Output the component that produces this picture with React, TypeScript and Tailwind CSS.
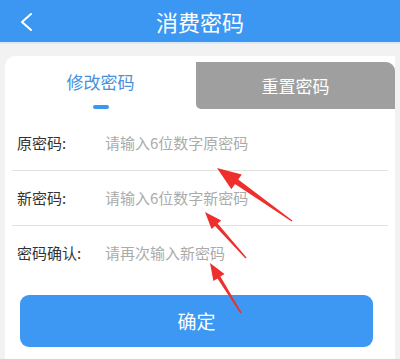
import React from "react"

type Pt = [number, number]

const FIELDS = [
  { label: "原密码:", hint: "请输入6位数字原密码" },
  { label: "新密码:", hint: "请输入6位数字新密码" },
  { label: "密码确认:", hint: "请再次输入新密码" },
]

// annotation arrows drawn over the form
const ARROWS: { tip: Pt; tail: Pt; head: number; half: number; shaft: number }[] = [
  { tip: [217, 168], tail: [292, 221], head: 24, half: 9, shaft: 5.5 },
  { tip: [205, 212], tail: [246, 258], head: 17, half: 6.5, shaft: 3.5 },
  { tip: [210, 263], tail: [241, 313], head: 17, half: 6.5, shaft: 3.5 },
]

function arrowPoints({ tip, tail, head, half, shaft }: (typeof ARROWS)[number]) {
  const dx = tip[0] - tail[0]
  const dy = tip[1] - tail[1]
  const len = Math.hypot(dx, dy)
  const ux = dx / len
  const uy = dy / len
  const nx = -uy
  const ny = ux
  const bx = tip[0] - ux * head
  const by = tip[1] - uy * head
  const p = (x: number, y: number) => `${x.toFixed(1)},${y.toFixed(1)}`
  return [
    p(tip[0], tip[1]),
    p(bx + nx * half, by + ny * half),
    p(bx + (nx * shaft) / 2, by + (ny * shaft) / 2),
    p(tail[0] + nx * 0.7, tail[1] + ny * 0.7),
    p(tail[0] - nx * 0.7, tail[1] - ny * 0.7),
    p(bx - (nx * shaft) / 2, by - (ny * shaft) / 2),
    p(bx - nx * half, by - ny * half),
  ].join(" ")
}

export default function App() {
  return (
    <div
      className="relative h-[359px] w-[400px] overflow-hidden bg-[#f2f2f3]"
      style={{ fontFamily: '"Noto Sans CJK SC", "Noto Sans", sans-serif' }}
    >
      <header className="relative flex h-[44px] items-center justify-center border-b-2 border-[#d6eafc] bg-[#3c97f2]">
        <svg
          className="absolute left-[18px] top-[11px]"
          width="18"
          height="22"
          viewBox="0 0 18 22"
          fill="none"
        >
          <polyline
            points="13,3 4,11 13,19"
            stroke="white"
            strokeWidth="2"
            strokeLinecap="round"
            strokeLinejoin="round"
          />
        </svg>
        <h1 className="text-[22px] leading-none text-white">消费密码</h1>
      </header>

      <div className="mx-[5px] mt-[12px] h-[320px] rounded-tl-[10px] bg-white">
        <div className="flex h-[54px]">
          <div className="flex w-[191px] flex-col items-center pt-[14px]">
            <span className="text-[17px] leading-[24px] text-[#4a90dc]">修改密码</span>
            <span className="mt-[11px] h-[4px] w-[16px] rounded-sm bg-[#3c97f2]" />
          </div>
          <div className="mt-[6px] mb-px flex flex-1 items-center justify-center rounded-tr-[9px] rounded-bl-[5px] bg-[#9f9f9f]">
            <span className="text-[17px] leading-none text-white">重置密码</span>
          </div>
        </div>

        <div className="mx-[7px] pt-[6px]">
          {FIELDS.map((f, i) => (
            <div
              key={f.label}
              className={`flex h-[55px] items-center pl-[5px] ${i < FIELDS.length - 1 ? "border-b border-[#e2e2e2]" : ""}`}
            >
              <span className="w-[88px] text-[15px] text-[#333333]">{f.label}</span>
              <span className="text-[15px] text-[#ababab]">{f.hint}</span>
            </div>
          ))}
        </div>

        <button className="mx-[15px] mt-[14px] flex h-[52px] w-[353px] items-center justify-center rounded-[9px] bg-[#3d98f3] text-[19px] text-white">
          确定
        </button>
      </div>

      <svg className="pointer-events-none absolute left-0 top-0" width="400" height="359">
        {ARROWS.map((a, i) => (
          <polygon key={i} points={arrowPoints(a)} fill="#ee2f2c" />
        ))}
      </svg>
    </div>
  )
}
